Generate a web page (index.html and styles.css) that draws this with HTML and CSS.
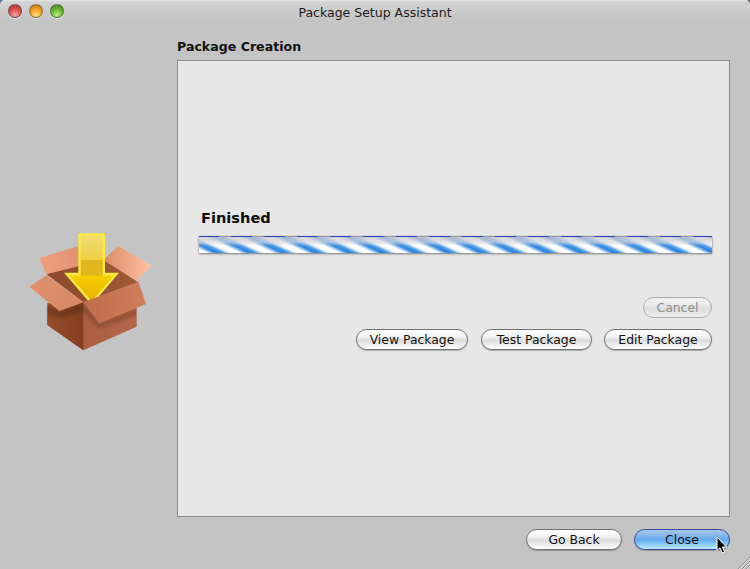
FILE: index.html
```html
<!DOCTYPE html>
<html lang="en">
<head>
<meta charset="utf-8">
<title>Package Setup Assistant</title>
<link rel="stylesheet" href="styles.css">
</head>
<body>
<div class="window">
  <header class="titlebar">
    <div class="lights">
      <span class="light red"></span>
      <span class="light amber"></span>
      <span class="light green"></span>
    </div>
    <div class="title">Package Setup Assistant</div>
  </header>
  <div class="content">
    <aside class="side">
      <svg class="pkg" width="140" height="135" viewBox="0 0 420 405" aria-hidden="true">
        <defs>
          <linearGradient id="flapR" x1="0" x2="1" y1="0" y2="0"><stop offset="0" stop-color="#d98a68"/><stop offset="1" stop-color="#ffc2a2"/></linearGradient>
          <linearGradient id="flapBL" x1="0" x2="1" y1="0" y2="0"><stop offset="0" stop-color="#ec9f80"/><stop offset="1" stop-color="#e29272"/></linearGradient>
          <linearGradient id="flapL" x1="0" x2="1" y1="0" y2="0"><stop offset="0" stop-color="#e0916f"/><stop offset="1" stop-color="#d68763"/></linearGradient>
          <linearGradient id="flapF" x1="0" x2="1" y1="0" y2="0"><stop offset="0" stop-color="#c06c4a"/><stop offset="1" stop-color="#cf7d5a"/></linearGradient>
          <linearGradient id="bodyL" x1="0" x2="1" y1="0" y2="0"><stop offset="0" stop-color="#934c2b"/><stop offset="1" stop-color="#843f20"/></linearGradient>
          <linearGradient id="bodyR" x1="0" x2="1" y1="0" y2="0"><stop offset="0" stop-color="#a35a38"/><stop offset="1" stop-color="#b4664a"/></linearGradient>
          <linearGradient id="inside" x1="0" x2="1" y1="0" y2="0"><stop offset="0" stop-color="#8c4a2a"/><stop offset="1" stop-color="#a05a36"/></linearGradient>
          <linearGradient id="shaftTop" x1="0" x2="0" y1="0" y2="1"><stop offset="0" stop-color="#efdc6e"/><stop offset="1" stop-color="#f0cf4a"/></linearGradient>
          <linearGradient id="shaftLow" x1="0" x2="0" y1="0" y2="1"><stop offset="0" stop-color="#e0b420"/><stop offset="1" stop-color="#eec010"/></linearGradient>
          <linearGradient id="headFill" x1="0" x2="0" y1="0" y2="1"><stop offset="0" stop-color="#f6d000"/><stop offset="1" stop-color="#e8b008"/></linearGradient>
          <filter id="soft" x="-20%" y="-20%" width="140%" height="140%"><feGaussianBlur stdDeviation="6"/></filter>
          <clipPath id="bodyClip"><polygon points="82,235 190,232 350,178 350,305 190,376 82,300"/></clipPath>
        </defs>
        <polygon points="57,100 175,63 180,140 80,148" fill="url(#flapBL)"/>
        <polygon points="250,105 295,63 395,122 345,170" fill="url(#flapR)"/>
        <polygon points="80,148 250,105 355,172 190,232" fill="url(#inside)"/>
        <polygon points="175,25 255,25 255,143 297,143 215,240 132,143 175,143" fill="#ffe844"/>
        <polygon points="182,32 248,32 248,104 182,104" fill="url(#shaftTop)"/>
        <polygon points="182,104 248,104 248,152 280,152 215,228 150,152 182,152" fill="url(#shaftLow)"/>
        <polygon points="150,152 280,152 215,228" fill="url(#headFill)"/>
        <polygon points="82,240 190,232 350,178 350,305 190,376 82,300" fill="url(#bodyR)"/>
        <polygon points="82,235 190,232 190,376 82,300" fill="url(#bodyL)"/>
        <g clip-path="url(#bodyClip)">
          <polygon points="70,240 118,262 190,236 190,256 118,278 70,256" fill="#3c1a08" opacity=".4" filter="url(#soft)"/>
          <polygon points="190,236 238,298 360,250 360,262 236,310 190,258" fill="#3c1a08" opacity=".35" filter="url(#soft)"/>
        </g>
        <polygon points="28,185 80,150 190,232 118,258" fill="url(#flapL)"/>
        <polygon points="190,232 355,170 378,237 238,295" fill="url(#flapF)"/>
      </svg>
    </aside>
    <main class="main">
      <h1 class="heading">Package Creation</h1>
      <section class="panel">
        <h2 class="status">Finished</h2>
        <div class="progress"></div>
        <div class="cancel-row"><button class="btn disabled" type="button">Cancel</button></div>
        <div class="actions">
          <button class="btn view" type="button">View Package</button>
          <button class="btn test" type="button">Test Package</button>
          <button class="btn edit" type="button">Edit Package</button>
        </div>
      </section>
      <footer class="footer">
        <button class="btn back" type="button">Go Back</button>
        <button class="btn primary" type="button">Close</button>
      </footer>
    </main>
  </div>
  <svg class="cursor" width="13" height="19" viewBox="0 0 13 19" aria-hidden="true">
    <path d="M1 1 L1 14.5 L4 11.8 L6.3 17 L8.6 16 L6.4 11 L10.5 11 Z" fill="#000" stroke="#fff" stroke-width="1"/>
  </svg>
  <svg class="grip" width="14" height="14" viewBox="0 0 14 14" aria-hidden="true">
    <path d="M2 14 L14 2 M6 14 L14 6 M10 14 L14 10" stroke="#8e8e8e" stroke-width="1" fill="none"/>
    <path d="M3 14 L14 3 M7 14 L14 7 M11 14 L14 11" stroke="#e0e0e0" stroke-width="1" fill="none"/>
  </svg>
</div>
</body>
</html>
```
FILE: styles.css
```css
* { box-sizing: border-box; }
html, body { margin: 0; padding: 0; height: 100%; background: #5f6b78; }
body { font-family: "DejaVu Sans", sans-serif; color: #111; overflow: hidden; }

.window {
  position: relative;
  width: 750px;
  height: 569px;
  display: flex;
  flex-direction: column;
  background: #c4c4c4;
  border-radius: 5px 5px 0 0;
}
.titlebar {
  height: 22px;
  flex: none;
  position: relative;
  display: flex;
  align-items: center;
  justify-content: center;
  background: linear-gradient(#e8e8e8 0, #d2d2d2 2px, #c4c4c4 100%);
  border-radius: 5px 5px 0 0;
}
.lights { position: absolute; left: 8px; top: 4px; display: flex; gap: 7px; }
.light {
  width: 14px;
  height: 14px;
  border-radius: 50%;
  border: 1px solid rgba(70,70,70,.55);
  box-shadow: 0 1px 1px rgba(255,255,255,.6);
}
.red { background: radial-gradient(circle at 50% 85%, #f5a6a6 0, #d84a4a 55%, #9a3030 100%); }
.amber { background: radial-gradient(circle at 50% 85%, #ffe27a 0, #f09a20 55%, #a87420 100%); }
.green { background: radial-gradient(circle at 50% 85%, #c0f080 0, #62b030 55%, #42822a 100%); }
.title { font-size: 12.5px; color: #1c1c1c; position: relative; top: 1px; }

.content { flex: 1; display: flex; min-height: 0; }
.side {
  width: 177px;
  flex: none;
  padding: 203px 0 0 20px;
}
.pkg { display: block; overflow: visible; }
.main { flex: 1; display: flex; flex-direction: column; padding-right: 20px; min-width: 0; }
.heading { margin: 16px 0 0; height: 23px; font-size: 12.6px; line-height: 17px; font-weight: 700; color: #111; }
.panel {
  height: 457px;
  flex: none;
  background: #e7e7e7;
  border: 1px solid #8c8c8c;
  padding: 147px 17px 0 21px;
  display: flex;
  flex-direction: column;
  margin-top: -1px;
}
.status { margin: 0 0 0 2px; height: 28px; font-size: 14.6px; line-height: 20px; font-weight: 700; color: #0c0c0c; }
.progress {
  height: 17px;
  flex: none;
  box-shadow: 0 1px 2px rgba(0,0,0,.45), 0 0 1px rgba(0,0,0,.25);
  background:
    repeating-linear-gradient(90deg, #2c46b8 0, #2c46b8 19px, #9a9aa8 21px, #9a9aa8 31px, #2c46b8 33px) 0 0 / 100% 1px no-repeat,
    linear-gradient(rgba(195,195,205,.82) 0, rgba(215,215,222,.72) 36%, rgba(255,255,255,.05) 58%, rgba(255,255,255,0) 100%),
    repeating-linear-gradient(25deg, #ffffff 0, #ffffff 3.5px, #8fbdee 5.5px, #2480da 7.5px, #4c9ce8 10.5px, #cfe2f6 12.5px, #ffffff 14px);
}
.cancel-row { display: flex; justify-content: flex-end; margin-top: 44px; }
.actions { display: flex; justify-content: flex-end; gap: 12px; margin-top: 11px; }

.btn {
  height: 21px;
  padding: 0;
  border-radius: 11px;
  border: 1px solid #6f6f6f;
  font-family: "DejaVu Sans", sans-serif;
  font-size: 12.4px;
  line-height: 18px;
  color: #111;
  background: linear-gradient(#ffffff 0, #f3f3f3 35%, #dcdcdc 55%, #ececec 75%, #ffffff 100%);
  box-shadow: 0 1px 1px rgba(0,0,0,.25);
}
.view { width: 112px; margin-right: 1px; }
.test { width: 111px; }
.edit { width: 108px; }
.disabled {
  width: 69px;
  color: #8b8b8b;
  border-color: #ababab;
  background: linear-gradient(#f1f1f1 0, #ececec 35%, #dcdcdc 55%, #e4e4e4 75%, #efefef 100%);
  box-shadow: none;
}
.footer { display: flex; justify-content: flex-end; gap: 12px; margin-top: 12px; }
.back { width: 96px; }
.primary {
  width: 96px;
  border-color: #3a4a9e;
  background: linear-gradient(#a6c6ea 0, #8cb8ea 25%, #64a8ee 50%, #88ccf8 75%, #bceafe 100%);
}
.cursor { position: absolute; left: 716px; top: 536px; }
.grip { position: absolute; right: 0; bottom: 0; }
```
